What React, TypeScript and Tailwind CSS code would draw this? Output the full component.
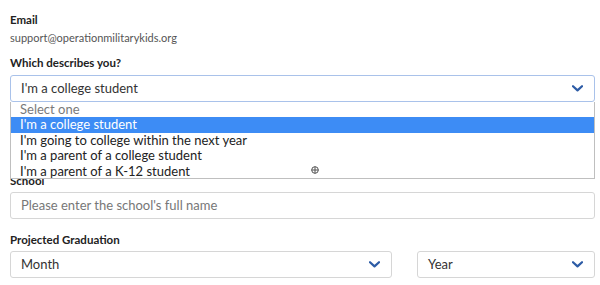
import React from 'react';

const font = { fontFamily: 'Lato, "Noto Sans", sans-serif' };

function Chevron() {
  return (
    <svg width="11" height="7" viewBox="0 0 11 7" className="shrink-0">
      <path d="M1 1.2 L5.5 5.4 L10 1.2" fill="none" stroke="#2d5ca6" strokeWidth="2.2" strokeLinecap="round" strokeLinejoin="round" />
    </svg>
  );
}

function SelectBox({ value, focused, className }: { value: string; focused?: boolean; className?: string }) {
  return (
    <div
      className={
        'h-[27px] flex items-center justify-between pl-[10px] pr-[11px] rounded-[3px] bg-white border text-[13px] text-[#333] ' +
        (focused ? 'border-[#a9c2ea] ' : 'border-[#d6d6d6] ') +
        (className ?? '')
      }
    >
      <span>{value}</span>
      <Chevron />
    </div>
  );
}

const options = [
  "I'm a college student",
  "I'm going to college within the next year",
  "I'm a parent of a college student",
  "I'm a parent of a K-12 student",
];

export default function App() {
  return (
    <div className="relative w-[600px] h-[285px] bg-white overflow-hidden pl-[10px] pr-[5px] pt-[13px]" style={font}>
      <div className="text-[11.5px] leading-[14px] font-bold text-[#222]">Email</div>
      <div className="mt-[4px] text-[11px] leading-[14px] text-[#555]">support@operationmilitarykids.org</div>

      <div className="mt-[11px] text-[11.5px] leading-[14px] font-bold text-[#222]">Which describes you?</div>
      <SelectBox value="I'm a college student" focused className="mt-[5px]" />

      <div className="mt-[72px] text-[11.5px] leading-[14px] font-bold text-[#222]">School</div>
      <div className="mt-[4px] h-[27px] flex items-center pl-[10px] rounded-[3px] border border-[#d6d6d6] text-[13px] text-[#777]">
        Please enter the school's full name
      </div>

      <div className="mt-[14px] text-[11.5px] leading-[14px] font-bold text-[#222]">Projected Graduation</div>
      <div className="mt-[4px] flex gap-[25px]">
        <SelectBox value="Month" className="w-[382px] shrink-0" />
        <SelectBox value="Year" className="w-[178px] shrink-0" />
      </div>

      {/* open native list */}
      <div className="absolute left-[10px] top-[102px] w-[585px] h-[77px] bg-white border-x border-b border-[#bfbfbf] text-[13px] leading-[15.4px]">
        <div className="pl-[9px] text-[#7a7a7a]">Select one</div>
        {options.map((o, i) => (
          <div key={o} className={'pl-[9px] ' + (i === 0 ? 'bg-[#3d8cf5] text-white' : 'text-[#222]')}>
            {o}
          </div>
        ))}
      </div>

      <svg className="absolute left-[311px] top-[166px]" width="8" height="8" viewBox="0 0 8 8">
        <circle cx="4" cy="4" r="3.3" fill="none" stroke="#555" strokeWidth="1" />
        <path d="M4 0.5 V7.5 M0.5 4 H7.5" stroke="#555" strokeWidth="1" />
      </svg>
    </div>
  );
}
